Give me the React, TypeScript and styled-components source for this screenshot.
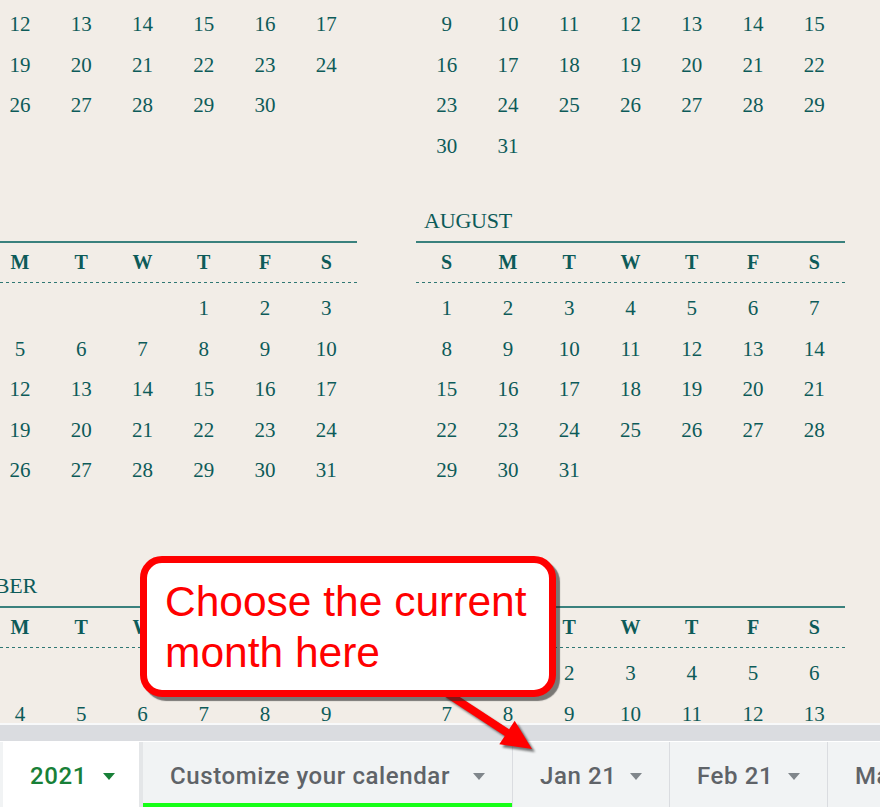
import React from "react";
import styled, { createGlobalStyle } from "styled-components";

const GlobalStyle = createGlobalStyle`
  html, body {
    margin: 0;
    padding: 0;
    width: 880px;
    height: 807px;
    overflow: hidden;
    background: #f2ede7;
  }
  #root { height: 100%; }
`;

const Page = styled.div`
  position: relative;
  display: flex;
  flex-direction: column;
  width: 880px;
  height: 807px;
  overflow: hidden;
`;

const Sheet = styled.div`
  flex: none;
  height: 723px;
  overflow: hidden;
  background: #f2ede7;
`;

/* the sheet is scrolled: the first visible band starts above the viewport */
const YearGrid = styled.div`
  display: grid;
  grid-template-columns: repeat(3, 429px);
  column-gap: 59px;
  width: max-content;
  margin-left: -72px;
  margin-top: -161px;
`;

const MonthBlock = styled.section`
  height: 365px;
  font-family: "Liberation Serif", "DejaVu Serif", serif;
  color: #0d5b59;
`;

const MonthTitle = styled.div`
  height: 37px;
  line-height: 34px;
  padding-left: 8px;
  font-size: 22px;
  letter-spacing: -0.2px;
  border-bottom: 2px solid #3a817d;
`;

const WeekHeader = styled.div`
  display: grid;
  grid-template-columns: repeat(7, 1fr);
  height: 40px;
  line-height: 39px;
  text-align: center;
  font-size: 20px;
  font-weight: 700;
  background-image: repeating-linear-gradient(
    to right,
    #2f7773 0 3px,
    transparent 3px 6px
  );
  background-size: 100% 1.5px;
  background-position: 0 38.5px;
  background-repeat: no-repeat;
`;

const DayGrid = styled.div`
  display: grid;
  grid-template-columns: repeat(7, 1fr);
  grid-auto-rows: 40.5px;
  padding-top: 5px;
  text-align: center;
  font-size: 21px;
  line-height: 40.5px;
`;

const Band = styled.div`
  flex: none;
  height: 16px;
  background: #dadce0;
  border-top: 2px solid #f8f9fa;
  border-bottom: 1px solid #ffffff;
`;

const TabStrip = styled.div`
  flex: none;
  display: flex;
  height: 65px;
  padding-left: 3px;
  background: #f1f3f4;
  font-family: Roboto, "Liberation Sans", sans-serif;
`;

const Tab = styled.div<{ $active?: boolean; $marked?: boolean; $w: number }>`
  flex: none;
  box-sizing: border-box;
  width: ${(p) => p.$w}px;
  display: flex;
  align-items: center;
  justify-content: space-between;
  padding: 3px ${(p) => (p.$active ? 24 : 27)}px 0 27px;
  font-size: 24px;
  font-weight: 500;
  letter-spacing: 0.6px;
  white-space: nowrap;
  color: ${(p) => (p.$active ? "#188038" : "#5f6368")};
  background: ${(p) => (p.$active ? "#ffffff" : "#f1f3f4")};
  border-right: ${(p) => (p.$active ? "4px solid #e4e6e8" : "1px solid #dadce0")};
  box-shadow: ${(p) => (p.$marked ? "inset 0 -4px 0 #16ff16" : "none")};
`;

const Caret = styled.span<{ $active?: boolean }>`
  flex: none;
  width: 0;
  height: 0;
  border-left: 6.5px solid transparent;
  border-right: 6.5px solid transparent;
  border-top: 7px solid ${(p) => (p.$active ? "#188038" : "#80868b")};
`;

const Callout = styled.div`
  position: absolute;
  left: 140px;
  top: 556px;
  width: 416px;
  height: 141px;
  box-sizing: border-box;
  padding: 13px 0 0 18px;
  border: 7px solid #ff0000;
  border-radius: 22px;
  background: #ffffff;
  box-shadow: 4px 4px 1px rgba(40, 40, 40, 0.6);
  font-family: "Liberation Sans", Arial, sans-serif;
  font-size: 42.5px;
  line-height: 51px;
  color: #ff0000;
  white-space: nowrap;
`;

const ArrowSvg = styled.svg`
  position: absolute;
  left: 420px;
  top: 680px;
  width: 130px;
  height: 80px;
  overflow: visible;
  filter: drop-shadow(3px 3px 1px rgba(30, 30, 30, 0.6));
`;

const MONTHS = [
  "APRIL",
  "MAY",
  "JUNE",
  "JULY",
  "AUGUST",
  "SEPTEMBER",
  "OCTOBER",
  "NOVEMBER",
  "DECEMBER",
];
const WEEK = ["S", "M", "T", "W", "T", "F", "S"];

const TABS = [
  { label: "2021", w: 140, active: true },
  { label: "Customize your calendar", w: 370, marked: true },
  { label: "Jan 21", w: 157 },
  { label: "Feb 21", w: 158 },
  { label: "Mar 21", w: 158 },
];

function Month({ index }: { index: number }) {
  const m = index + 3;
  const first = new Date(2021, m, 1).getDay();
  const days = new Date(2021, m + 1, 0).getDate();
  const cells: (number | null)[] = [];
  for (let i = 0; i < first; i++) cells.push(null);
  for (let d = 1; d <= days; d++) cells.push(d);
  return (
    <MonthBlock>
      <MonthTitle>{MONTHS[index]}</MonthTitle>
      <WeekHeader>
        {WEEK.map((w, i) => (
          <span key={i}>{w}</span>
        ))}
      </WeekHeader>
      <DayGrid>
        {cells.map((c, i) => (
          <span key={i}>{c ?? ""}</span>
        ))}
      </DayGrid>
    </MonthBlock>
  );
}

export default function App() {
  return (
    <>
      <GlobalStyle />
      <Page>
        <Sheet>
          <YearGrid>
            {MONTHS.map((_, i) => (
              <Month key={i} index={i} />
            ))}
          </YearGrid>
        </Sheet>
        <Band />
        <TabStrip>
          {TABS.map((t) => (
            <Tab key={t.label} $w={t.w} $active={t.active} $marked={t.marked}>
              {t.label}
              <Caret $active={t.active} />
            </Tab>
          ))}
        </TabStrip>
        <ArrowSvg viewBox="0 0 130 80">
          <line x1="25" y1="12" x2="89" y2="54" stroke="#ff0000" strokeWidth="8" />
          <polygon points="112,69 79.3,64.2 94.7,40.8" fill="#ff0000" />
        </ArrowSvg>
        <Callout>
          Choose the current
          <br />
          month here
        </Callout>
      </Page>
    </>
  );
}
